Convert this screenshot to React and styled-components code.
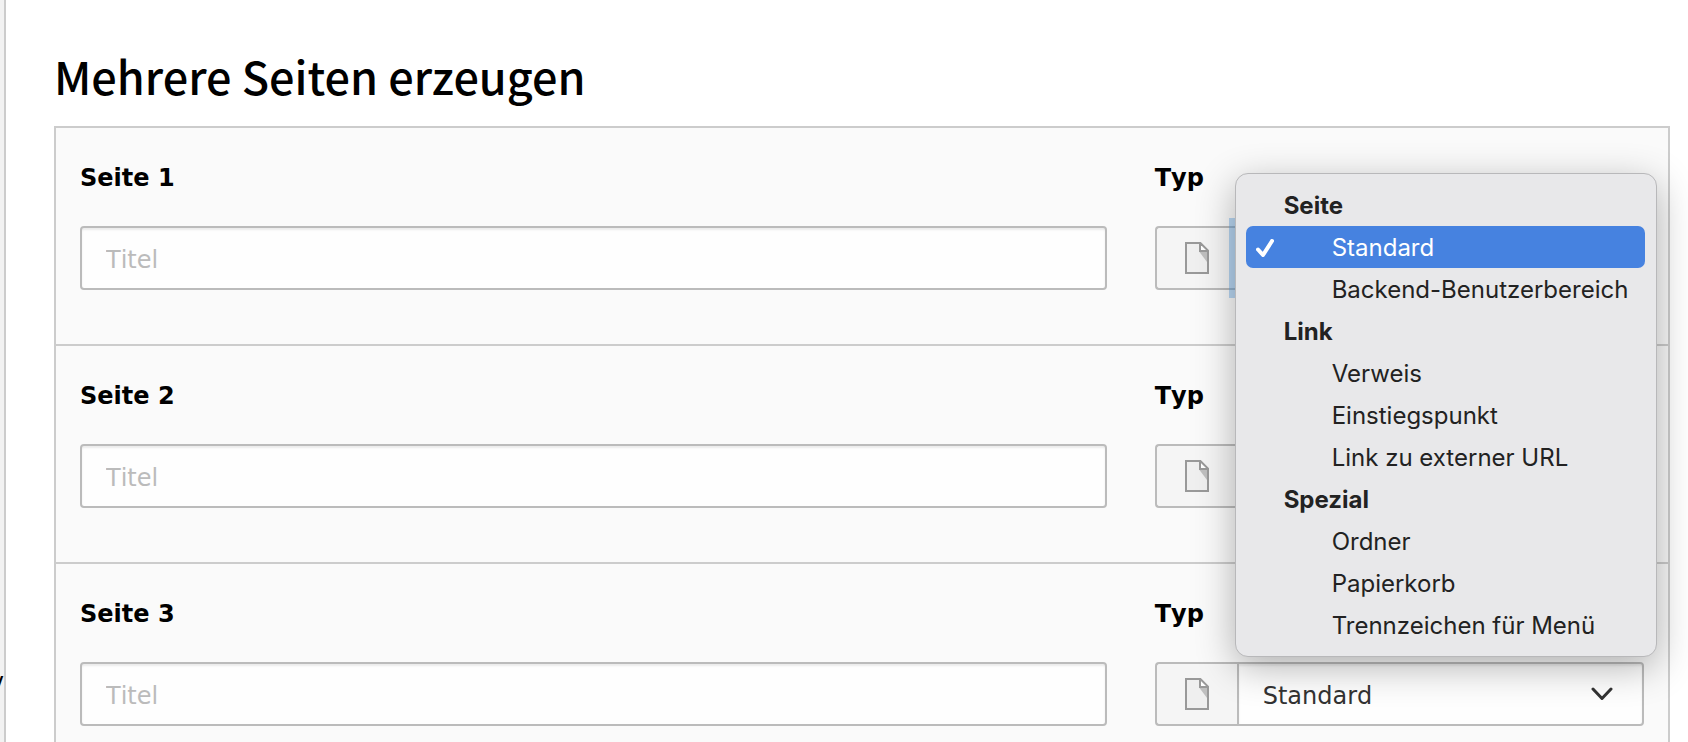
import React from "react";
import styled, { createGlobalStyle } from "styled-components";

const GlobalStyle = createGlobalStyle`
  *, *::before, *::after { box-sizing: border-box; }
  body {
    margin: 0;
    background: #fff;
    color: #000;
    font: 24px/36px "DejaVu Sans", Verdana, sans-serif;
    font-kerning: none;
  }
`;

const Shell = styled.div`
  display: flex;
  height: 100vh;
  overflow: hidden;
`;

const Sidebar = styled.aside`
  display: flex;
  flex: 0 0 6px;
  justify-content: flex-end;
  padding-top: 664px;
  overflow: hidden;
  background: #f2f2f2;
  border-right: 2px solid #ccc;
`;

const Main = styled.main`
  flex: 1;
  min-width: 0;
  padding: 42px 18px 0 48px;
`;

const Heading = styled.h1`
  margin: 0 0 16px;
  font: 500 45px/68px "Noto Sans CJK SC", "Noto Sans", sans-serif;
`;

const Panel = styled.form`
  background: #fafafa;
  border: 2px solid #ccc;
`;

const PageRow = styled.div`
  display: grid;
  grid-template-columns: 2fr 1fr;
  padding: 32px 0 54px;

  & + & {
    border-top: 2px solid #ccc;
  }
`;

const Field = styled.div`
  display: flex;
  flex-direction: column;
  gap: 30px;
  min-width: 0;
  padding: 0 24px;
`;

const Label = styled.label`
  font-weight: bold;
`;

const TitleInput = styled.input`
  width: 100%;
  height: 64px;
  padding: 4px 24px 0;
  font: inherit;
  color: #333;
  background: #fefefe;
  border: 2px solid #bbb;
  border-radius: 4px;
  box-shadow: inset 0 2px 2px rgba(0, 0, 0, 0.075);

  &::placeholder {
    color: #bbb;
    opacity: 1;
  }
`;

const InputGroup = styled.div`
  display: flex;
`;

const Addon = styled.span`
  display: flex;
  flex: 0 0 82px;
  align-items: center;
  justify-content: center;
  height: 64px;
  background: #f5f5f5;
  border: 2px solid #bbb;
  border-right: 0;
  border-radius: 4px 0 0 4px;
`;

const SelectBox = styled.div`
  position: relative;
  display: flex;
  flex: 1;
  align-items: center;
  min-width: 0;
  z-index: ${(p) => (p.$open ? 1 : 0)};
  box-shadow: ${(p) => (p.$open ? "0 0 0 8px rgba(84, 160, 230, 0.4)" : "none")};
`;

const TypeSelect = styled.select`
  width: 100%;
  height: 64px;
  padding: 4px 72px 0 24px;
  appearance: none;
  font: inherit;
  color: #333;
  background: #fefefe;
  border: 2px solid #bbb;
  border-radius: 0 4px 4px 0;
  box-shadow: inset 0 2px 2px rgba(0, 0, 0, 0.075);
`;

const Chevron = styled.svg`
  position: absolute;
  right: 31px;
  pointer-events: none;
`;

const Menu = styled.div`
  position: absolute;
  top: -53px;
  left: -2px;
  right: -13px;
  padding: 10px 11px 10px 10px;
  background: #e8e8ea;
  border: 1px solid #b8b8ba;
  border-radius: 13px;
  box-shadow: 0 10px 38px rgba(0, 0, 0, 0.3);
  font: 24px/42px Inter, "Liberation Sans", sans-serif;
  font-kerning: auto;
  color: #222;
`;

const GroupTitle = styled.div`
  height: 42px;
  padding: 1px 0 0 38px;
  font-weight: 700;
`;

const Option = styled.button`
  display: flex;
  align-items: center;
  width: 100%;
  height: 42px;
  padding: 2px 0 0 10px;
  border: 0;
  border-radius: 7px;
  font: inherit;
  text-align: left;
  white-space: nowrap;
  color: ${(p) => (p.$active ? "#fff" : "inherit")};
  background: ${(p) => (p.$active ? "#4682e0" : "transparent")};
`;

const OptionMark = styled.span`
  display: flex;
  flex: 0 0 76px;
`;

const GROUPS = [
  { title: "Seite", options: ["Standard", "Backend-Benutzerbereich"] },
  { title: "Link", options: ["Verweis", "Einstiegspunkt", "Link zu externer URL"] },
  { title: "Spezial", options: ["Ordner", "Papierkorb", "Trennzeichen für Menü"] },
];

const PageIcon = () => (
  <svg width="24" height="32" viewBox="0 0 24 32" aria-hidden="true">
    <path d="M1 1h14.4L23 8.6V31H1z" fill="#efefef" />
    <path d="M15 2l7 7h-7z" fill="#fff" />
    <path d="M14.5 10H22v10z" fill="#bfbfbf" />
    <path d="M1 1h14.4L23 8.6V31H1zM15 1v8h8" fill="none" stroke="#999" strokeWidth="2" />
  </svg>
);

const CheckIcon = () => (
  <svg width="18" height="18" viewBox="0 0 18 18" aria-hidden="true">
    <path d="M2 10.5l5 5.5L16 2" fill="none" stroke="#fff" strokeWidth="4" strokeLinecap="round" strokeLinejoin="round" />
  </svg>
);

function TypeMenu({ selected }) {
  return (
    <Menu role="listbox" aria-label="Typ">
      {GROUPS.map((group) => (
        <div role="group" aria-label={group.title} key={group.title}>
          <GroupTitle>{group.title}</GroupTitle>
          {group.options.map((name) => (
            <Option
              type="button"
              role="option"
              key={name}
              aria-selected={name === selected}
              $active={name === selected}
            >
              <OptionMark>{name === selected && <CheckIcon />}</OptionMark>
              {name}
            </Option>
          ))}
        </div>
      ))}
    </Menu>
  );
}

function NewPage({ number, open }) {
  return (
    <PageRow>
      <Field>
        <Label htmlFor={`title-${number}`}>Seite {number}</Label>
        <TitleInput id={`title-${number}`} type="text" placeholder="Titel" />
      </Field>
      <Field>
        <Label htmlFor={`type-${number}`}>Typ</Label>
        <InputGroup>
          <Addon>
            <PageIcon />
          </Addon>
          <SelectBox $open={open}>
            <TypeSelect id={`type-${number}`} defaultValue="Standard">
              {GROUPS.map((group) => (
                <optgroup label={group.title} key={group.title}>
                  {group.options.map((name) => (
                    <option key={name}>{name}</option>
                  ))}
                </optgroup>
              ))}
            </TypeSelect>
            <Chevron width="22" height="14" viewBox="0 0 22 14" aria-hidden="true">
              <path d="M2 2l9 9.5L20 2" fill="none" stroke="#333" strokeWidth="3" strokeLinecap="round" strokeLinejoin="round" />
            </Chevron>
            {open && <TypeMenu selected="Standard" />}
          </SelectBox>
        </InputGroup>
      </Field>
    </PageRow>
  );
}

export default function App() {
  return (
    <>
      <GlobalStyle />
      <Shell>
        <Sidebar>v</Sidebar>
        <Main>
          <Heading>Mehrere Seiten erzeugen</Heading>
          <Panel>
            <NewPage number={1} open />
            <NewPage number={2} />
            <NewPage number={3} />
          </Panel>
        </Main>
      </Shell>
    </>
  );
}
